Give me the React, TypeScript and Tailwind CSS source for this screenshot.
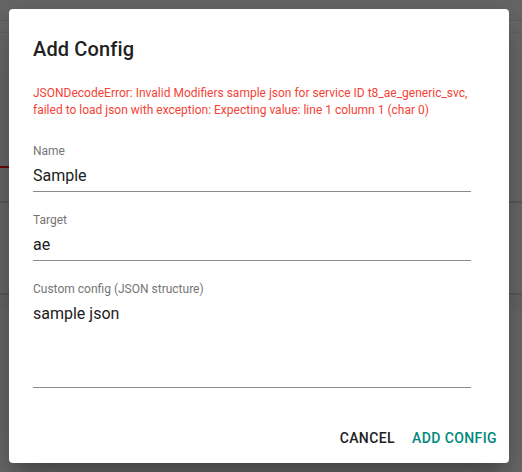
import React from "react";

function Field({ label, value, tall }: { label: string; value: string; tall?: boolean }) {
  return (
    <div className="w-[438px]">
      <div className="text-[12px] leading-[14px] text-[#757575]">{label}</div>
      <div
        className={
          "mt-[8px] text-[16px] leading-[19px] text-[#212121] border-b border-[#8a8a8a] " +
          (tall ? "h-[84px]" : "h-[26px]")
        }
      >
        {value}
      </div>
    </div>
  );
}

export default function App() {
  return (
    <div
      className="relative w-[522px] h-[472px] overflow-hidden bg-[#6b6b6b]"
      style={{ fontFamily: "Roboto, 'Liberation Sans', sans-serif" }}
    >
      <div className="flex flex-col">
        <div className="h-[21px] bg-[#676767] border-b border-[#5e5e5e]" />
        <div className="h-[12px] bg-[#6a6a6a] border-b border-[#646464]" />
        <div className="h-[133px] bg-[#6b6b6b]" />
        <div className="h-[2px] w-[200px] bg-[#6a0a0a]" />
        <div className="h-[35px] bg-[#6b6b6b] border-b-2 border-[#5d5d5d]" />
        <div className="h-[92px] bg-[#6b6b6b] border-b-2 border-[#5d5d5d]" />
        <div className="h-[14px] bg-[#686868]" />
        <div className="flex-1 bg-[#6b6b6b]" />
      </div>

      <div className="absolute left-[9px] top-[9px] w-[500px] h-[454px] bg-white rounded-[4px] shadow-[0_11px_15px_-7px_rgba(0,0,0,0.2),0_24px_38px_3px_rgba(0,0,0,0.14),0_9px_46px_8px_rgba(0,0,0,0.12)] flex flex-col">
        <div className="px-[24px] pt-[24px]">
          <h2 className="text-[20px] leading-[32px] font-medium text-[#212121] tracking-[0.15px]">
            Add Config
          </h2>
          <div className="mt-[20px] text-[12px] leading-[17px] text-[#f44336] whitespace-nowrap">
            JSONDecodeError: Invalid Modifiers sample json for service ID t8_ae_generic_svc,
            <br />
            failed to load json with exception: Expecting value: line 1 column 1 (char 0)
          </div>
          <div className="mt-[25px] flex flex-col gap-[21px]">
            <Field label="Name" value="Sample" />
            <Field label="Target" value="ae" />
            <Field label="Custom config (JSON structure)" value="sample json" tall />
          </div>
        </div>
        <div className="mt-auto flex justify-end items-center gap-[1px] pr-[4px] pb-[7px]">
          <button className="h-[36px] px-[8px] text-[14px] font-medium tracking-[0.4px] text-[#212121] uppercase">
            Cancel
          </button>
          <button className="h-[36px] px-[8px] text-[14px] font-medium tracking-[0.4px] text-[#00897b] uppercase">
            Add Config
          </button>
        </div>
      </div>
    </div>
  );
}
